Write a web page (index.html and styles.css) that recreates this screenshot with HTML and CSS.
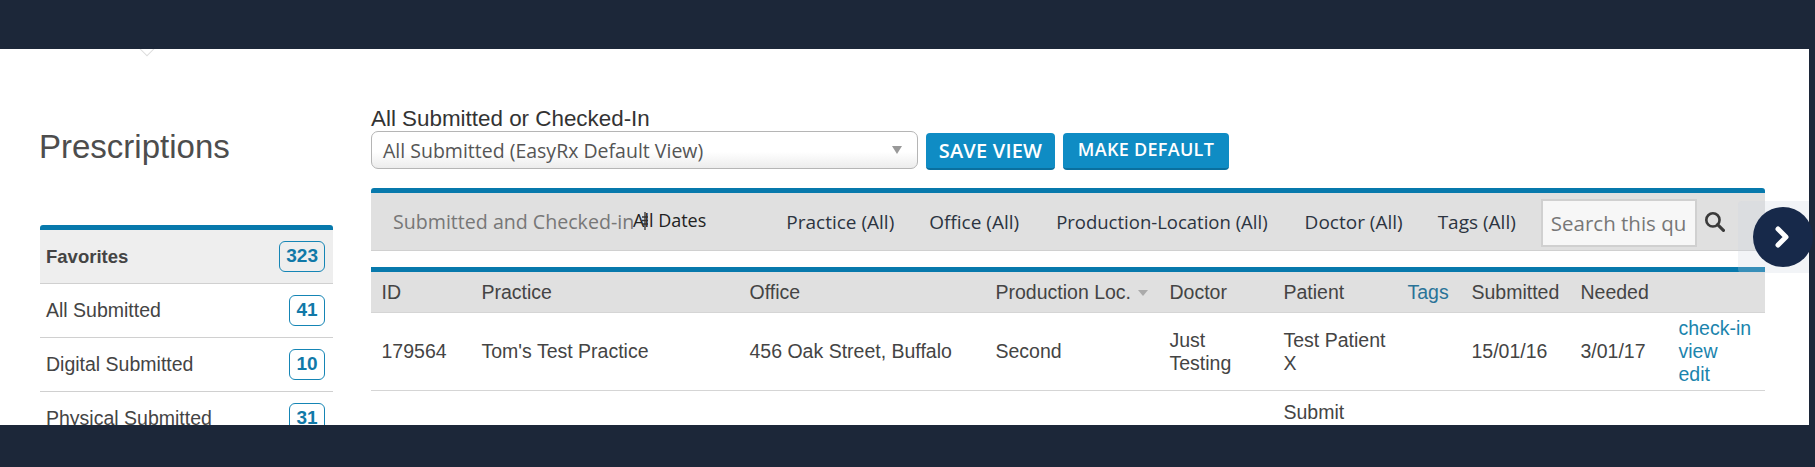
FILE: index.html
```html
<!DOCTYPE html>
<html lang="en">
<head>
    <meta charset="UTF-8">
    <title>Prescriptions</title>
    <link rel="stylesheet" href="styles.css">
</head>
<body>
    <div class="shell">
        <div class="page">
            <span class="caret"></span>
            <div class="sidebar">
                <h1>Prescriptions</h1>
                <div class="views">
                    <div class="view head"><span>Favorites</span><span class="count">323</span></div>
                    <div class="view"><span>All Submitted</span><span class="count">41</span></div>
                    <div class="view"><span>Digital Submitted</span><span class="count">10</span></div>
                    <div class="view"><span>Physical Submitted</span><span class="count">31</span></div>
                </div>
            </div>
            <div class="main">
                <div class="picker-label">All Submitted or Checked-In</div>
                <div class="picker">
                    <div class="select"><span>All Submitted (EasyRx Default View)</span><span class="select-arrow"></span></div>
                    <button class="button save">SAVE VIEW</button>
                    <button class="button default">MAKE DEFAULT</button>
                </div>
                <div class="filters">
                    <span class="filter-title">Submitted and Checked-in</span>
                    <span class="filter dates">All Dates
                        <svg class="dates-mark" width="10" height="20" viewBox="0 0 10 20"><path d="M5 1v18M2 6h6M2 9.500h6M2 13h6" stroke="#333" stroke-width="1.300" fill="none"/></svg>
                    </span>
                    <span class="filter">Practice (All)</span>
                    <span class="filter office">Office (All)</span>
                    <span class="filter location">Production-Location (All)</span>
                    <span class="filter">Doctor (All)</span>
                    <span class="filter tags">Tags (All)</span>
                    <input class="search" placeholder="Search this query">
                    <svg class="search-icon" width="21" height="21" viewBox="0 0 20 20"><circle cx="8.500" cy="8.500" r="6.300" fill="none" stroke="#3a3a3a" stroke-width="2.500"/><path d="M13 13l5.500 5.500" stroke="#3a3a3a" stroke-width="3" stroke-linecap="round"/></svg>
                </div>
                <table>
                    <thead>
                        <tr>
                            <th class="c-id">ID</th>
                            <th class="c-practice">Practice</th>
                            <th class="c-office">Office</th>
                            <th class="c-loc">Production Loc. <span class="sort"></span></th>
                            <th class="c-doctor">Doctor</th>
                            <th class="c-patient">Patient</th>
                            <th class="c-tags">Tags</th>
                            <th class="c-sub">Submitted</th>
                            <th class="c-need">Needed</th>
                            <th class="c-links"></th>
                        </tr>
                    </thead>
                    <tbody>
                        <tr>
                            <td>179564</td>
                            <td>Tom's Test Practice</td>
                            <td>456 Oak Street, Buffalo</td>
                            <td>Second</td>
                            <td>Just<br>Testing</td>
                            <td>Test Patient<br>X</td>
                            <td></td>
                            <td>15/01/16</td>
                            <td>3/01/17</td>
                            <td class="links"><a>check-in</a><br><a>view</a><br><a>edit</a></td>
                        </tr>
                        <tr class="cut">
                            <td></td><td></td><td></td><td></td><td></td>
                            <td>Submit</td>
                            <td></td><td></td><td></td><td></td>
                        </tr>
                    </tbody>
                </table>
            </div>
            <div class="next-tab"></div>
        </div>
        <div class="next">
            <svg width="20" height="24" viewBox="0 0 20 24"><path d="M5 4l8 8-8 8" fill="none" stroke="#fff" stroke-width="5" stroke-linecap="round" stroke-linejoin="round"/></svg>
        </div>
    </div>
</body>
</html>
```
FILE: styles.css
```css
body {
    margin: 0;
    height: 467px;
    overflow: hidden;
    background-color: #1c2739;
    font-family: "Liberation Sans", Arial, sans-serif;
    color: #444;
}

.shell {
    position: relative;
    padding-top: 49px;
}

.page {
    position: relative;
    display: flex;
    width: 1809px;
    height: 376px;
    overflow: hidden;
    background-color: white;
}

.caret {
    position: absolute;
    left: 141px;
    top: -7px;
    width: 10px;
    height: 10px;
    background-color: white;
    border: 1px solid #ddd;
    transform: rotate(45deg);
}

.sidebar {
    width: 293px;
    margin-left: 40px;
    flex: none;
}

.sidebar h1 {
    margin: 79px 0 0 -1px;
    font-size: 33px;
    line-height: 38px;
    font-weight: normal;
    color: #4d4d4d;
}

.views {
    margin-top: 59px;
    border-top: 5px solid #0779ac;
    border-radius: 3px 3px 0 0;
}

.view {
    display: flex;
    justify-content: space-between;
    align-items: center;
    height: 53px;
    padding: 0 8px 0 6px;
    border-bottom: 1px solid #d0d0d0;
    font-size: 19.500px;
    color: #444;
}

.view.head {
    background-color: #eee;
    font-weight: bold;
    font-size: 18.500px;
}

.count {
    box-sizing: border-box;
    min-width: 36px;
    height: 31px;
    padding: 0 6px;
    border: 1.500px solid #1585b5;
    border-radius: 6px;
    color: #1179a8;
    font-size: 19px;
    line-height: 28px;
    font-weight: bold;
    text-align: center;
}

.main {
    width: 1394px;
    margin-left: 38px;
    flex: none;
}

.picker-label {
    margin-top: 58px;
    font-size: 22.400px;
    line-height: 24px;
    color: #333;
}

.picker {
    display: flex;
    align-items: flex-start;
    gap: 8px;
    height: 39px;
}

.select {
    box-sizing: border-box;
    display: flex;
    justify-content: space-between;
    align-items: center;
    width: 547px;
    height: 38px;
    padding: 0 15px 0 11px;
    border: 1px solid #b5b5b5;
    border-radius: 7px;
    background: linear-gradient(#fff 55%, #ececec);
    font-family: "Open Sans", sans-serif;
    font-size: 19.500px;
    color: #555;
}

.select-arrow {
    border-left: 5px solid transparent;
    border-right: 5px solid transparent;
    border-top: 8px solid #999;
}

.button {
    box-sizing: border-box;
    height: 37px;
    margin-top: 2px;
    padding: 0;
    border: none;
    border-bottom: 2px solid #0a6f9e;
    border-radius: 4px;
    background-color: #0f8cc4;
    color: white;
    font-family: "Open Sans", sans-serif;
    font-weight: 600;
    cursor: pointer;
}

.save {
    width: 129px;
    font-size: 20px;
    letter-spacing: 0.200px;
}

.default {
    width: 166px;
    padding-bottom: 3px;
    font-size: 18px;
    letter-spacing: 0.300px;
}

.filters {
    box-sizing: border-box;
    display: flex;
    align-items: center;
    height: 63px;
    margin-top: 18px;
    padding-left: 22px;
    border-top: 5px solid #0779ac;
    border-bottom: 1px solid #d0d0d0;
    border-radius: 3px 3px 0 0;
    background-color: #e0e0e0;
    font-family: "Open Sans", sans-serif;
    font-size: 19px;
    color: #2c3440;
}

.filter-title {
    width: 240px;
    flex: none;
    color: #777;
    font-size: 19.600px;
    white-space: nowrap;
}

.filter {
    margin-right: 35px;
    white-space: nowrap;
}

.dates {
    position: relative;
    margin-right: 80px;
    margin-top: -3px;
    font-size: 18px;
    color: #222;
}

.dates-mark {
    position: absolute;
    left: 7px;
    top: 3px;
}

.office {
    margin-right: 37px;
}

.location {
    margin-right: 37px;
    font-size: 18.500px;
}

.tags {
    margin-right: 25px;
}

.search {
    box-sizing: border-box;
    width: 156px;
    height: 48px;
    flex: none;
    margin-top: 3px;
    padding: 0 8px;
    border: 2px solid #d0d0d0;
    background-color: #f7f7f7;
    font-family: "Open Sans", sans-serif;
    font-size: 20.500px;
}

.search::placeholder {
    color: #777;
    opacity: 1;
}

.search-icon {
    margin-left: 7px;
}

table {
    table-layout: fixed;
    width: 1394px;
    margin-top: 16px;
    border-collapse: collapse;
    border-top: 5px solid #0779ac;
    font-size: 19.500px;
}

th {
    box-sizing: border-box;
    height: 43px;
    padding: 0 0 0 10.500px;
    border-bottom: 1px solid #d5d5d5;
    background-color: #e0e0e0;
    font-weight: normal;
    text-align: left;
    color: #444;
    white-space: nowrap;
}

td {
    height: 77px;
    padding: 0 0 0 10.500px;
    border-bottom: 1px solid #d5d5d5;
    line-height: 23px;
    color: #444;
    white-space: nowrap;
}

.c-id { width: 100px; }
.c-practice { width: 268px; }
.c-office { width: 246px; }
.c-loc { width: 174px; }
.c-doctor { width: 114px; }
.c-patient { width: 124px; }
.c-tags { width: 64px; }
.c-sub { width: 109px; }
.c-need { width: 98px; }
.c-links { width: 97px; }

.c-tags {
    color: #2a7398;
}

.sort {
    display: inline-block;
    margin-left: 2px;
    border-left: 5px solid transparent;
    border-right: 5px solid transparent;
    border-top: 6px solid #aaa;
    vertical-align: middle;
}

.links a {
    color: #1b84ad;
}

.cut td {
    height: 34px;
    vertical-align: top;
    padding-top: 10px;
    border-bottom: none;
}

.next-tab {
    position: absolute;
    left: 1738px;
    top: 152px;
    width: 71px;
    height: 72px;
    background-color: rgba(205, 210, 222, 0.25);
    border-radius: 4px 0 0 4px;
}

.next {
    position: absolute;
    left: 1753px;
    top: 207px;
    display: flex;
    justify-content: center;
    align-items: center;
    width: 60px;
    height: 60px;
    border-radius: 50%;
    background-color: #17294a;
}
```
